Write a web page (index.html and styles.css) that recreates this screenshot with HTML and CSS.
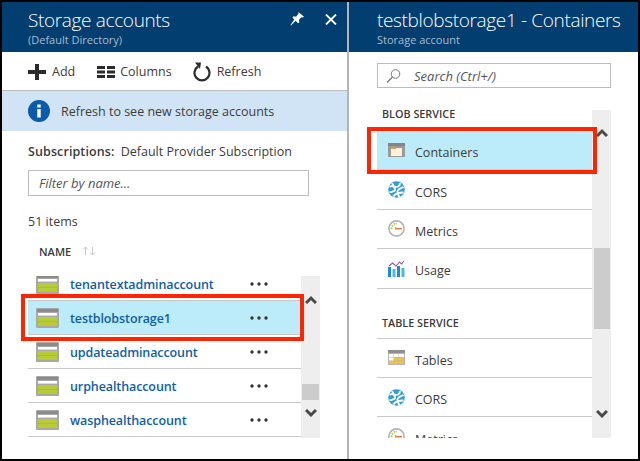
FILE: index.html
```html
<!DOCTYPE html>
<html lang="en">
<head>
    <meta charset="UTF-8">
    <meta name="viewport" content="width=device-width, initial-scale=1.0">
    <title>Storage accounts</title>
    <link rel="stylesheet" href="styles.css">
</head>
<body>
    <svg class="defs" width="0" height="0">
        <symbol id="storage" viewBox="0 0 23 20">
            <rect width="23" height="20" rx="1" fill="#a8a8a8"/>
            <rect x="1" y="1" width="21" height="3" fill="#8b8b8b"/>
            <rect x="2" y="5" width="19" height="2.6" fill="#fff"/>
            <rect x="2" y="9" width="19" height="4" fill="#b8cc36"/>
            <rect x="2" y="14" width="19" height="4" fill="#b8cc36"/>
        </symbol>
        <symbol id="dots" viewBox="0 0 18 4">
            <circle cx="2" cy="2" r="1.7" fill="#333"/>
            <circle cx="9" cy="2" r="1.7" fill="#333"/>
            <circle cx="16" cy="2" r="1.7" fill="#333"/>
        </symbol>
        <symbol id="up" viewBox="0 0 12 9">
            <path d="M1 8 L6 3 L11 8" fill="none" stroke="#4a4a4a" stroke-width="3"/>
        </symbol>
        <symbol id="down" viewBox="0 0 12 9">
            <path d="M1 1 L6 6 L11 1" fill="none" stroke="#4a4a4a" stroke-width="3"/>
        </symbol>
        <symbol id="cors" viewBox="0 0 17 17">
            <circle cx="8.5" cy="8.5" r="8.3" fill="#2f9fd6"/>
            <path d="M1.5 6 C4 3.5 7 7 10 5.5 C11.5 4.8 12 3.5 12 2 M4.5 2 C4 4.5 7.5 6 7 9 C6.5 11 3.5 10.5 1.5 11.5 M15.5 6 C13 7.5 10.5 7 9.5 10 C8.8 12.5 11 14 11 16 M5.5 15.5 C7 12.5 12 11.5 15.5 11.5" fill="none" stroke="#fff" stroke-width="1.9"/>
        </symbol>
        <symbol id="metrics" viewBox="0 0 17 17">
            <circle cx="8.5" cy="8.5" r="7.6" fill="#fff" stroke="#b4b4b4" stroke-width="1.6"/>
            <path d="M3.5 9 A5 5 0 0 1 9 3.6" fill="none" stroke="#a9cf4a" stroke-width="1.8" stroke-dasharray="1.6 1"/>
            <rect x="7" y="8" width="7" height="1.4" fill="#e8792b"/>
            <rect x="7" y="7" width="1.4" height="3" fill="#e8b02b"/>
        </symbol>
        <symbol id="usage" viewBox="0 0 17 17">
            <path d="M1 6 L4.5 3 L8 6 L11.5 2 L13.5 4 L16 1" fill="none" stroke="#8f5ba8" stroke-width="1.1"/>
            <rect x="0" y="7" width="3" height="10" fill="#1e8bcd"/>
            <rect x="4.5" y="9" width="3" height="8" fill="#59b4d9"/>
            <rect x="9" y="6" width="3" height="11" fill="#1e8bcd"/>
            <rect x="13.5" y="8" width="3" height="9" fill="#59b4d9"/>
        </symbol>
    </svg>

    <div class="frame">
        <section class="blade blade-left">
            <header class="head">
                <div class="head-text">
                    <h1>Storage accounts</h1>
                    <p>(Default Directory)</p>
                </div>
                <svg class="pin" width="15" height="14" viewBox="0 0 16 15"><path d="M9 0 L15 5 L13.5 6 L12 5.5 L9.5 8.5 L10 11 L8.5 12 L6 9.5 L1 14.5 L0.5 14 L4.5 8 L2.5 5.5 L4 4.5 L6.5 5 L9 2 Z" fill="#fff"/></svg>
                <svg class="close" width="12" height="11" viewBox="0 0 12 11"><path d="M1 0.5 L11 10.5 M11 0.5 L1 10.5" stroke="#fff" stroke-width="1.8" fill="none"/></svg>
            </header>

            <div class="toolbar">
                <span class="tool">
                    <svg width="18" height="16" viewBox="0 0 18 16"><path d="M7 0 H11 V6 H18 V10 H11 V16 H7 V10 H0 V6 H7 Z" fill="#2b2b2b"/></svg>
                    Add
                </span>
                <span class="tool tool-columns">
                    <svg width="18" height="12" viewBox="0 0 18 12"><path d="M0 0 H8 V3 H0 Z M10 0 H18 V3 H10 Z M0 4.5 H8 V7.5 H0 Z M10 4.5 H18 V7.5 H10 Z M0 9 H8 V12 H0 Z M10 9 H18 V12 H10 Z" fill="#2b2b2b"/></svg>
                    Columns
                </span>
                <span class="tool tool-refresh">
                    <svg width="18" height="20" viewBox="0 0 18 20"><path d="M5 4.5 A7.5 7.5 0 1 0 13 4.5" fill="none" stroke="#2b2b2b" stroke-width="2.2"/><path d="M2 0.5 L8 0.5 L7 7 Z" fill="#2b2b2b"/></svg>
                    Refresh
                </span>
            </div>

            <div class="notice">
                <svg width="22" height="22" viewBox="0 0 22 22"><circle cx="11" cy="11" r="11" fill="#0a5cab"/><rect x="9.3" y="9" width="3.4" height="8.5" fill="#fff"/><rect x="9.3" y="4.5" width="3.4" height="3" fill="#fff"/></svg>
                <span>Refresh to see new storage accounts</span>
            </div>

            <div class="body-left">
                <p class="subs"><b>Subscriptions:</b> Default Provider Subscription</p>
                <div class="field filter">Filter by name...</div>
                <p class="count">51 items</p>
                <div class="col-name">
                    NAME
                    <svg width="14" height="10" viewBox="0 0 14 10"><path d="M3.5 9 V1 M1 3.5 L3.5 1 L6 3.5 M10.5 1 V9 M8 6.5 L10.5 9 L13 6.5" fill="none" stroke="#c8c8c8" stroke-width="1"/></svg>
                </div>
                <div class="accounts">
                    <div class="account-list">
                        <div class="account">
                            <svg class="store" width="23" height="20"><use href="#storage"/></svg>
                            <a>tenantextadminaccount</a>
                            <svg class="more" width="18" height="4"><use href="#dots"/></svg>
                        </div>
                        <div class="account selected">
                            <svg class="store" width="23" height="20"><use href="#storage"/></svg>
                            <a>testblobstorage1</a>
                            <svg class="more" width="18" height="4"><use href="#dots"/></svg>
                        </div>
                        <div class="account">
                            <svg class="store" width="23" height="20"><use href="#storage"/></svg>
                            <a>updateadminaccount</a>
                            <svg class="more" width="18" height="4"><use href="#dots"/></svg>
                        </div>
                        <div class="account">
                            <svg class="store" width="23" height="20"><use href="#storage"/></svg>
                            <a>urphealthaccount</a>
                            <svg class="more" width="18" height="4"><use href="#dots"/></svg>
                        </div>
                        <div class="account">
                            <svg class="store" width="23" height="20"><use href="#storage"/></svg>
                            <a>wasphealthaccount</a>
                            <svg class="more" width="18" height="4"><use href="#dots"/></svg>
                        </div>
                    </div>
                    <div class="scrollbar scroll-left">
                        <svg class="chev-up" width="12" height="9"><use href="#up"/></svg>
                        <div class="thumb"></div>
                        <svg class="chev-down" width="12" height="9"><use href="#down"/></svg>
                    </div>
                </div>
            </div>
        </section>

        <section class="blade blade-right">
            <header class="head">
                <div class="head-text">
                    <h1>testblobstorage1 - Containers</h1>
                    <p>Storage account</p>
                </div>
            </header>

            <div class="body-right">
                <div class="field search">
                    <svg width="15" height="14" viewBox="0 0 15 14"><circle cx="9.5" cy="5" r="4.3" fill="none" stroke="#777" stroke-width="1"/><path d="M6.5 8 L1 13.5" stroke="#777" stroke-width="1.2"/></svg>
                    Search (Ctrl+/)
                </div>
                <div class="menu-wrap">
                    <div class="menu">
                        <h2>BLOB SERVICE</h2>
                        <div class="item selected">
                            <svg width="17" height="14" viewBox="0 0 17 14"><rect width="17" height="14" fill="#9a9a9a"/><rect y="0" width="17" height="3" fill="#858585"/><rect x="3" y="5" width="11" height="8" fill="#fdf3dc"/><path d="M3 4.5 H8 V6 H3 Z" fill="#f0a030"/></svg>
                            <span>Containers</span>
                        </div>
                        <div class="item">
                            <svg width="17" height="17"><use href="#cors"/></svg>
                            <span>CORS</span>
                        </div>
                        <div class="item">
                            <svg width="17" height="17"><use href="#metrics"/></svg>
                            <span>Metrics</span>
                        </div>
                        <div class="item">
                            <svg width="17" height="17"><use href="#usage"/></svg>
                            <span>Usage</span>
                        </div>
                        <h2 class="second">TABLE SERVICE</h2>
                        <div class="item">
                            <svg width="17" height="15" viewBox="0 0 17 15"><rect width="17" height="15" fill="#b5b5b5"/><rect y="0" width="17" height="3" fill="#8f8f8f"/><rect x="1" y="4" width="4.5" height="3" fill="#fff"/><rect x="6" y="4" width="4.5" height="3" fill="#fff"/><rect x="11" y="4" width="5" height="3" fill="#fff"/><rect x="1" y="7.5" width="4.5" height="3" fill="#fff"/><rect x="6" y="7.5" width="4.5" height="3" fill="#f4c430"/><rect x="11" y="7.5" width="5" height="3" fill="#f4c430"/><rect x="1" y="11" width="4.5" height="3" fill="#f4c430"/><rect x="6" y="11" width="4.5" height="3" fill="#f4c430"/><rect x="11" y="11" width="5" height="3" fill="#f4c430"/></svg>
                            <span>Tables</span>
                        </div>
                        <div class="item">
                            <svg width="17" height="17"><use href="#cors"/></svg>
                            <span>CORS</span>
                        </div>
                        <div class="item">
                            <svg width="17" height="17"><use href="#metrics"/></svg>
                            <span>Metrics</span>
                        </div>
                    </div>
                    <div class="scrollbar scroll-right">
                        <svg class="chev-up" width="12" height="9"><use href="#up"/></svg>
                        <div class="thumb"></div>
                        <svg class="chev-down" width="12" height="9"><use href="#down"/></svg>
                    </div>
                </div>
            </div>
        </section>

        <!-- red callouts drawn over the screenshot -->
        <div class="callout callout-account"></div>
        <div class="callout callout-containers"></div>
    </div>
</body>
</html>
```

FILE: styles.css
```css
* {
    box-sizing: border-box;
}
body {
    margin: 0;
    font-family: "Open Sans", sans-serif;
    font-size: 12.5px;
    color: #3c3c3c;
    background-color: #fff;
}
p, h1, h2 {
    margin: 0;
}
.defs {
    position: absolute;
}
.frame {
    position: relative;
    display: flex;
    width: 640px;
    height: 461px;
    border: 2px solid #000;
    background-color: #fff;
    overflow: hidden;
}
.blade-left {
    width: 347px;
    border-right: 2px solid #b4b4b4;
}
.blade-right {
    flex: 1;
}
.head {
    display: flex;
    height: 50px;
    padding-left: 26px;
    background-color: #023e6f;
    color: #fff;
}
.blade-right .head {
    padding-left: 28px;
}
.head-text {
    flex: 1;
    padding-top: 5px;
}
.head h1 {
    font-size: 19px;
    font-weight: 300;
    letter-spacing: -0.35px;
    line-height: 26px;
    white-space: nowrap;
}
.head p {
    font-size: 11px;
    line-height: 13px;
    color: #a9bccd;
}
.pin {
    margin: 10px 20px 0 0;
}
.close {
    margin: 12px 10px 0 0;
}
.toolbar {
    display: flex;
    height: 39px;
    padding: 1px 0 0 26px;
    border-bottom: 1px solid #bdbdbd;
    align-items: center;
}
.tool {
    display: flex;
    align-items: center;
    gap: 6px;
}
.tool-columns {
    margin-left: 22px;
    gap: 5px;
}
.tool-refresh {
    margin-left: 21px;
}
.notice {
    display: flex;
    align-items: center;
    gap: 11px;
    height: 40px;
    padding-left: 26px;
    background-color: #d0e4f5;
}
.body-left {
    padding-left: 26px;
}
.subs {
    padding-top: 10px;
    line-height: 21px;
}
.subs b {
    font-weight: 600;
    letter-spacing: 0.1px;
    margin-right: 3px;
}
.field {
    display: flex;
    align-items: center;
    border: 1px solid #bcbcbc;
    font-size: 13px;
    font-style: italic;
    color: #555;
}
.filter {
    width: 281px;
    height: 26px;
    margin-top: 8px;
    padding-left: 10px;
}
.count {
    margin-top: 16px;
    line-height: 20px;
}
.col-name {
    display: flex;
    align-items: center;
    gap: 11px;
    height: 20px;
    margin-top: 9px;
    padding-left: 11px;
    font-size: 11px;
    font-weight: 600;
}
.accounts {
    display: flex;
    width: 292px;
    height: 162px;
    margin-top: 15px;
    overflow: hidden;
}
.account-list {
    width: 273px;
    margin-top: -9px;
}
.account {
    display: flex;
    align-items: center;
    height: 34px;
    padding-left: 8px;
    border-bottom: 1px solid #c8c8c8;
}
.account a {
    width: 180px;
    margin-left: 11px;
    padding-top: 2px;
    font-weight: 600;
    letter-spacing: -0.1px;
    color: #0f5ea8;
}
.selected {
    background-color: #bcecf9;
}
.scrollbar {
    display: flex;
    flex-direction: column;
    align-items: center;
    background-color: #eeeeee;
}
.scrollbar .thumb {
    background-color: #cccccc;
}
.scroll-left {
    width: 19px;
}
.scroll-left .chev-up {
    margin-top: 19px;
}
.scroll-left .thumb {
    width: 17px;
    height: 16px;
    margin-top: 80px;
}
.scroll-left .chev-down {
    margin-top: 9px;
}
.body-right {
    padding-left: 28px;
}
.search {
    width: 234px;
    height: 25px;
    margin-top: 11px;
    padding-left: 8px;
    gap: 13px;
}
.menu-wrap {
    display: flex;
    width: 234px;
    height: 336px;
    margin-top: 14px;
}
.menu {
    width: 215px;
    overflow: hidden;
}
.menu h2 {
    height: 29px;
    padding-left: 5px;
    font-size: 10.8px;
    font-weight: 600;
    line-height: 24px;
}
.menu h2.second {
    height: 50px;
    padding-top: 22px;
    border-bottom: 1px solid #c8c8c8;
}
.item {
    display: flex;
    align-items: center;
    gap: 10px;
    height: 39.4px;
    padding-left: 11px;
    border-bottom: 1px solid #c8c8c8;
}
.item span {
    padding-top: 5px;
}
.scroll-right {
    width: 19px;
    margin-top: 8px;
}
.scroll-right .chev-up {
    margin-top: 18px;
}
.scroll-right .thumb {
    width: 16px;
    height: 81px;
    margin-top: 111px;
}
.scroll-right .chev-down {
    margin-top: 81px;
}
.callout {
    position: absolute;
    border: 4px solid #ff2500;
}
.callout-account {
    left: 19px;
    top: 292px;
    width: 283px;
    height: 47px;
}
.callout-containers {
    left: 365px;
    top: 125px;
    width: 230px;
    height: 47px;
}
```
